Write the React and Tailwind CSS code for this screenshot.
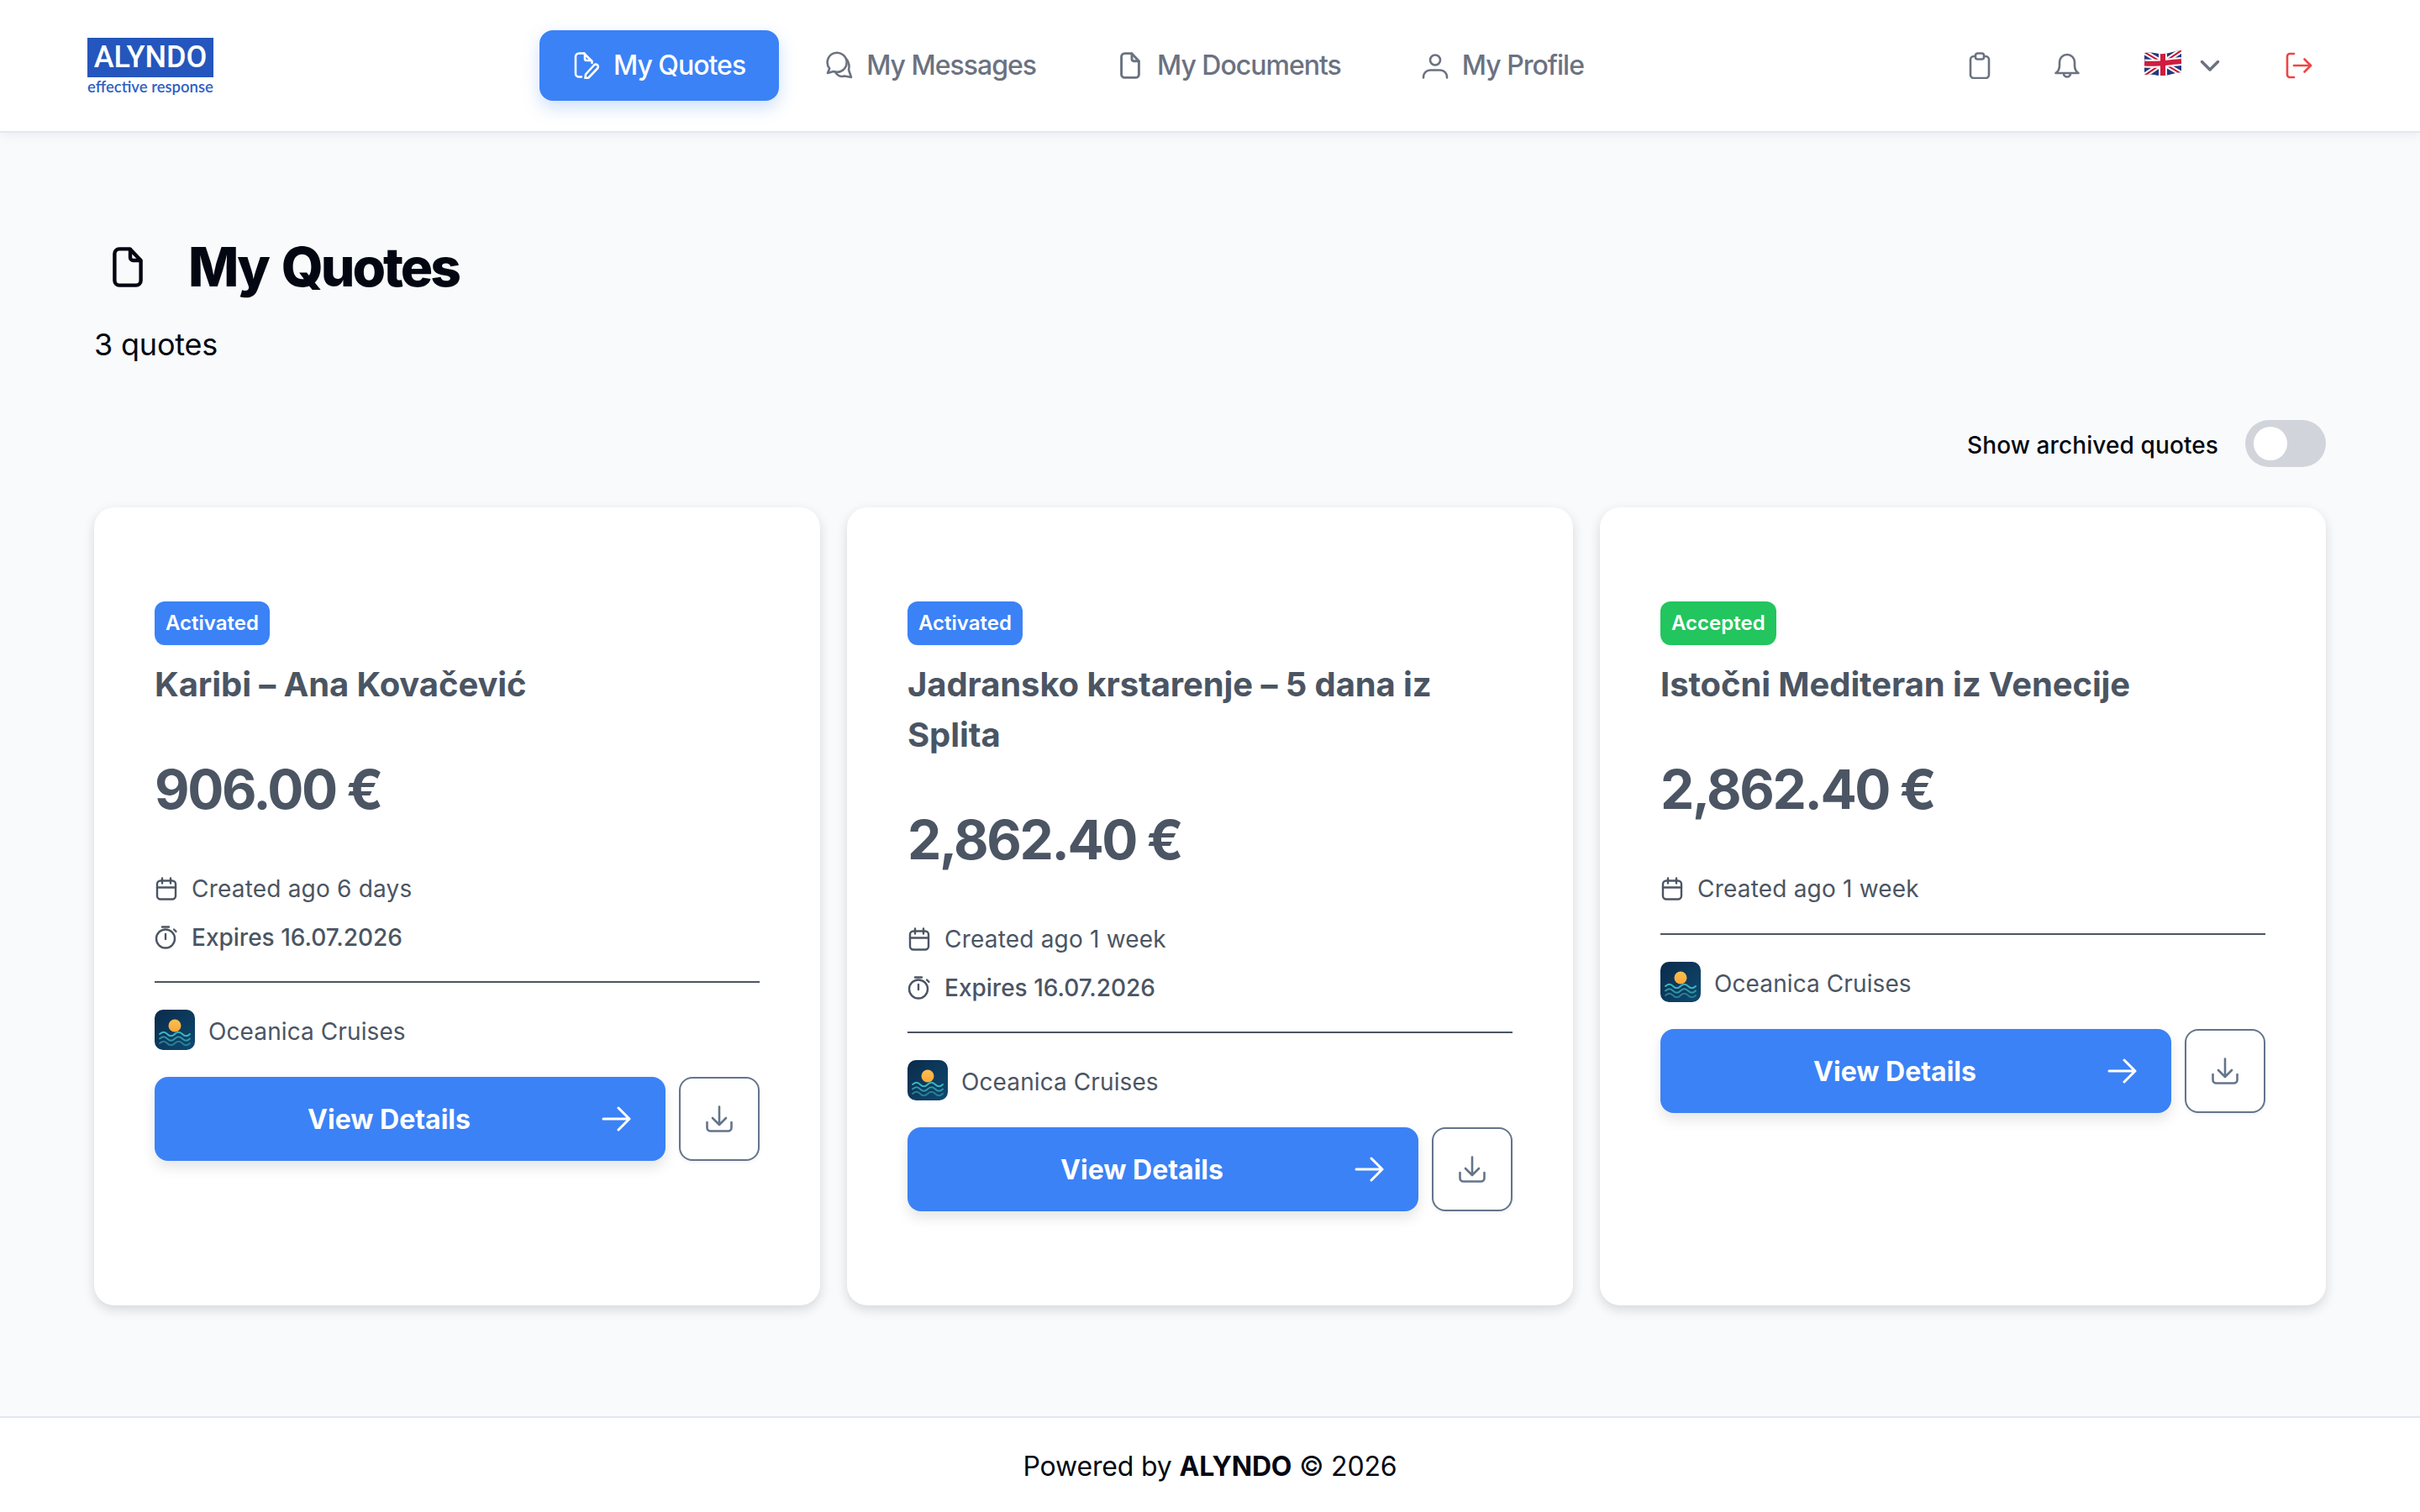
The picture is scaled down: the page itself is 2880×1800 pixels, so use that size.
import { useState } from "react";

const quotes = [
  { id: 1, status: "Activated", title: "Karibi – Ana Kovačević", price: "906.00 €", created: "Created ago 6 days", expires: "Expires 16.07.2026" },
  { id: 2, status: "Activated", title: "Jadransko krstarenje – 5 dana iz Splita", price: "2,862.40 €", created: "Created ago 1 week", expires: "Expires 16.07.2026" },
  { id: 3, status: "Accepted", title: "Istočni Mediteran iz Venecije", price: "2,862.40 €", created: "Created ago 1 week" },
];

function FileIcon({ className }) {
  return (
    <svg viewBox="0 0 36 48" fill="none" stroke="currentColor" strokeWidth="4.4" strokeLinejoin="round" strokeLinecap="round" className={className}>
      <path d="M8 2.400h12.500L33.600 16v24a5.600 5.600 0 0 1-5.600 5.600H8A5.600 5.600 0 0 1 2.400 40V8A5.600 5.600 0 0 1 8 2.400z" />
      <path d="M21 3v9.500a3.500 3.500 0 0 0 3.500 3.500H33" />
    </svg>
  );
}

function FilePencilIcon() {
  return (
    <svg viewBox="0 0 32 32" fill="none" stroke="currentColor" strokeWidth="2.6" strokeLinecap="round" strokeLinejoin="round" className="w-8 h-8">
      <path d="M13 1.500H7a4 4 0 0 0-4 4v20a4 4 0 0 0 4 4h3" />
      <path d="M13 1.500l9.500 9.500v2" />
      <path d="M14 2v6a2 2 0 0 0 2 2h6" />
      <path d="M25 15.500a2.700 2.700 0 0 1 4 4L18.500 30.500l-4 .5.5-4.500z" />
    </svg>
  );
}

function ChatIcon() {
  return (
    <svg viewBox="0 0 32 34" fill="none" stroke="currentColor" strokeWidth="2.6" strokeLinecap="round" strokeLinejoin="round" className="w-8 h-[34px]">
      <path d="M4.200 20.500A11.500 11.500 0 1 1 9 24l-7 2z" />
      <path d="M24 9c4 4 4 10 3 13l3 9-8-1.500c-4 1.500-8-.5-11-4.500" />
    </svg>
  );
}

function UserIcon() {
  return (
    <svg viewBox="0 0 32 32" fill="none" stroke="currentColor" strokeWidth="2.6" strokeLinecap="round" className="w-8 h-8">
      <circle cx="16" cy="9.500" r="6" />
      <path d="M2 30.500v-1a8 8 0 0 1 8-8h12a8 8 0 0 1 8 8v1" />
    </svg>
  );
}

function ClipboardIcon() {
  return (
    <svg viewBox="0 0 32 32" fill="none" stroke="currentColor" strokeWidth="2.6" className="w-8 h-8">
      <rect x="5" y="5" width="22" height="26" rx="4" />
      <rect x="11" y="1.500" width="10" height="7" rx="2.500" fill="#fff" />
    </svg>
  );
}

function BellIcon() {
  return (
    <svg viewBox="0 0 32 32" fill="none" stroke="currentColor" strokeWidth="2.6" strokeLinecap="round" strokeLinejoin="round" className="w-8 h-8">
      <path d="M2.500 25h27c-3-2-4.500-5-4.500-9v-4a9 9 0 0 0-18 0v4c0 4-1.500 7-4.500 9z" />
      <path d="M12 25.500a4 4 0 0 0 8 0" />
    </svg>
  );
}

function UkFlag() {
  return (
    <svg viewBox="0 0 44 30" className="w-11 h-[30px]">
      <defs>
        <clipPath id="flag-wave">
          <path d="M0 3C10 1 15 5 24 4 32 3 38 0 44 0v26c-6 0-12 3-20 4-9 1-14-3-24-1z" />
        </clipPath>
      </defs>
      <g clipPath="url(#flag-wave)">
        <rect width="44" height="30" fill="#1f3a7d" />
        <path d="M0 2l44 26M44 0L0 30" stroke="#fff" strokeWidth="6" />
        <path d="M0 2l44 26M44 0L0 30" stroke="#c8102e" strokeWidth="2" />
        <path d="M22 0v30M0 15.500C14 17 30 14 44 13" stroke="#fff" strokeWidth="10" fill="none" />
        <path d="M22 0v30M0 15.500C14 17 30 14 44 13" stroke="#d01c3f" strokeWidth="6" fill="none" />
      </g>
    </svg>
  );
}

function ChevronIcon() {
  return (
    <svg viewBox="0 0 32 32" fill="none" stroke="currentColor" strokeWidth="3.5" strokeLinecap="round" strokeLinejoin="round" className="w-8 h-8">
      <path d="M6.500 11.500l9.500 9.500 9.500-9.500" />
    </svg>
  );
}

function LogoutIcon() {
  return (
    <svg viewBox="0 0 32 32" fill="none" stroke="currentColor" strokeWidth="2.6" strokeLinecap="round" strokeLinejoin="round" className="w-8 h-8">
      <path d="M10 2H5a3 3 0 0 0-3 3v22a3 3 0 0 0 3 3h5" />
      <path d="M10 16h20" />
      <path d="M22.500 8.500L30 16l-7.500 7.500" />
    </svg>
  );
}

function CalendarIcon() {
  return (
    <svg viewBox="0 0 28 28" fill="none" stroke="currentColor" strokeWidth="2.4" strokeLinecap="round" className="w-7 h-7 shrink-0">
      <rect x="3" y="4.500" width="22" height="22" rx="4" />
      <path d="M9 1.500v6M19 1.500v6M3 12.500h22" />
    </svg>
  );
}

function StopwatchIcon() {
  return (
    <svg viewBox="0 0 28 28" fill="none" stroke="currentColor" strokeWidth="2.4" strokeLinecap="round" className="w-7 h-7 shrink-0">
      <circle cx="13" cy="15.500" r="11" />
      <path d="M9 1.500h8M13 10v6M23 4.500l2.500 2.500" />
    </svg>
  );
}

function ArrowIcon() {
  return (
    <svg viewBox="0 0 36 30" fill="none" stroke="currentColor" strokeWidth="3" strokeLinecap="round" strokeLinejoin="round" className="w-9 h-[30px] shrink-0">
      <path d="M2 15h31M20 2l13 13-13 13" />
    </svg>
  );
}

function DownloadIcon() {
  return (
    <svg viewBox="0 0 32 32" fill="none" stroke="currentColor" strokeWidth="2.6" strokeLinecap="round" strokeLinejoin="round" className="w-8 h-8">
      <path d="M16 1.500v21M8 15l8 8 8-8" />
      <path d="M1.500 20v6.500a4 4 0 0 0 4 4h21a4 4 0 0 0 4-4V20" />
    </svg>
  );
}

function CruiseLogo() {
  return (
    <svg viewBox="0 0 48 48" className="w-12 h-12 shrink-0">
      <defs>
        <linearGradient id="logo-bg" x1="0" y1="0" x2="1" y2="1">
          <stop offset="0" stopColor="#0b2a4a" />
          <stop offset="1" stopColor="#0e4a70" />
        </linearGradient>
        <linearGradient id="logo-sun" x1="0" y1="0" x2="0" y2="1">
          <stop offset="0" stopColor="#fbbf4d" />
          <stop offset="1" stopColor="#f9a83c" />
        </linearGradient>
      </defs>
      <rect width="48" height="48" rx="10" fill="url(#logo-bg)" />
      <circle cx="24" cy="19" r="7.500" fill="url(#logo-sun)" />
      <g fill="none" strokeLinecap="round" strokeWidth="2">
        <path d="M6 29c4-3 6-3 9 0s6 3 9 0 6-3 9 0 6 3 9 0" stroke="#3bb6c0" />
        <path d="M6 34.500c4-3 6-3 9 0s6 3 9 0 6-3 9 0 6 3 9 0" stroke="#2f97a8" />
        <path d="M6 40c4-3 6-3 9 0s6 3 9 0 6-3 9 0 6 3 9 0" stroke="#297f94" />
      </g>
    </svg>
  );
}

function NavItem({ icon, label, active }) {
  return (
    <a
      href="#"
      className={
        active
          ? "flex items-center gap-4 h-[84px] px-10 rounded-2xl bg-[#3b82f6] text-white font-medium shadow-[0_8px_20px_rgba(59,130,246,0.25)]"
          : "flex items-center gap-4 h-[84px] px-10 rounded-2xl text-[#6b7280] font-medium"
      }
    >
      <span className="w-8 h-8 flex items-center justify-center">{icon}</span>
      {label}
    </a>
  );
}

function QuoteCard({ quote }) {
  const badgeColor = quote.status === "Accepted" ? "bg-[#22c55e]" : "bg-[#3b82f6]";

  return (
    <div className="h-[950px] bg-white rounded-3xl pt-[112px] px-[72px] shadow-[0_5px_14px_rgba(0,0,0,0.14)] text-[#4b5563]">
      <span className={`inline-flex items-center h-[52px] px-[13px] rounded-xl text-white text-2xl font-semibold ${badgeColor}`}>
        {quote.status}
      </span>
      <h3 className="mt-[17px] text-[40px] leading-[60px] font-bold tracking-[-0.1px]">{quote.title}</h3>
      <p className="mt-[59px] text-[64px] leading-[72px] font-bold tracking-[-2.4px]">{quote.price}</p>

      <div className="mt-[61px] flex items-center gap-4 text-[28px] leading-[42px] tracking-[0.2px]">
        <CalendarIcon />
        {quote.created}
      </div>
      {quote.expires && (
        <div className="mt-4 flex items-center gap-4 text-[28px] leading-[42px] font-medium">
          <StopwatchIcon />
          {quote.expires}
        </div>
      )}

      <div className={quote.expires ? "mt-[31px] h-0.5 bg-[#4b5563]" : "mt-8 h-0.5 bg-[#4b5563]"} />

      <div className="mt-8 flex items-center gap-4 text-[28px] tracking-[0.1px]">
        <CruiseLogo />
        <span className="pt-[3px]">Oceanica Cruises</span>
      </div>

      <div className="mt-8 flex gap-4">
        <button className="w-[608px] h-[100px] flex items-center gap-4 pl-[42px] pr-10 rounded-2xl bg-[#3b82f6] text-white text-[32px] font-bold shadow-[0_8px_16px_rgba(0,0,0,0.1)]">
          <span className="flex-1 text-center pt-px">View Details</span>
          <ArrowIcon />
        </button>
        <button className="w-24 h-[100px] flex items-center justify-center rounded-2xl bg-white border-2 border-[#64748b] text-[#64748b] shadow-[0_2px_4px_rgba(0,0,0,0.06)]">
          <DownloadIcon />
        </button>
      </div>
    </div>
  );
}

export default function App() {
  const [archived, setArchived] = useState(false);

  return (
    <div className="min-h-screen flex flex-col bg-[#f9fafb] font-[Inter,sans-serif] text-[#030712]">
      <header className="h-[158px] shrink-0 flex items-center pl-[104px] pr-32 bg-white border-b-2 border-[#e2e8f0] shadow-[0_4px_10px_rgba(148,163,184,0.12)]">
        <div className="w-[150px] shrink-0">
          <div className="h-[47px] flex items-center justify-center bg-[#2456bd] text-white text-[36px] font-medium font-[Roboto,sans-serif]">
            ALYNDO
          </div>
          <div className="mt-[2px] text-[18.500px] leading-[18px] text-center font-semibold text-[#2f5fc4] whitespace-nowrap font-[Lato,sans-serif]">
            effective response
          </div>
        </div>

        <nav className="ml-[388px] flex items-center gap-4 text-[32px] tracking-[-1px]">
          <NavItem active icon={<FilePencilIcon />} label="My Quotes" />
          <NavItem icon={<ChatIcon />} label="My Messages" />
          <NavItem icon={<FileIcon className="w-6 h-8" />} label="My Documents" />
          <NavItem icon={<UserIcon />} label="My Profile" />
        </nav>

        <div className="ml-auto flex items-center text-[#6b7280]">
          <ClipboardIcon />
          <span className="ml-[72px]"><BellIcon /></span>
          <span className="ml-[76px] -mt-[6px]"><UkFlag /></span>
          <span className="ml-[18px]"><ChevronIcon /></span>
          <span className="ml-[74px] text-[#ef4444]"><LogoutIcon /></span>
        </div>
      </header>

      <main className="flex-1 px-28 pt-[120px] pb-[132px]">
        <div className="flex items-center h-20">
          <span className="w-[112px] pl-[22px]"><FileIcon className="w-9 h-12" /></span>
          <h1 className="text-[64px] leading-[80px] font-extrabold tracking-[-3px] [word-spacing:5px]">My Quotes</h1>
        </div>
        <p className="mt-[25px] text-4xl leading-[54px] tracking-[-0.2px]">3 quotes</p>

        <div className="mt-[63px] flex items-center justify-end gap-8">
          <span className="text-[28px] font-medium pt-[3px] tracking-[0.1px]">Show archived quotes</span>
          <button
            onClick={() => setArchived(!archived)}
            className={`w-24 h-14 rounded-full flex items-center px-2.5 bg-[#d1d5db] ${archived ? "justify-end" : "justify-start"}`}
          >
            <span className="w-10 h-10 rounded-full bg-white" />
          </button>
        </div>

        <div className="mt-12 grid grid-cols-3 gap-8">
          {quotes.map((quote) => (
            <QuoteCard key={quote.id} quote={quote} />
          ))}
        </div>
      </main>

      <footer className="h-[114px] shrink-0 flex items-center justify-center bg-white border-t-2 border-[#e2e8f0] text-[32px] tracking-[-0.16px]">
        <span className="pt-[3px]">
          Powered by <strong className="font-bold">ALYNDO</strong> © 2026
        </span>
      </footer>
    </div>
  );
}
